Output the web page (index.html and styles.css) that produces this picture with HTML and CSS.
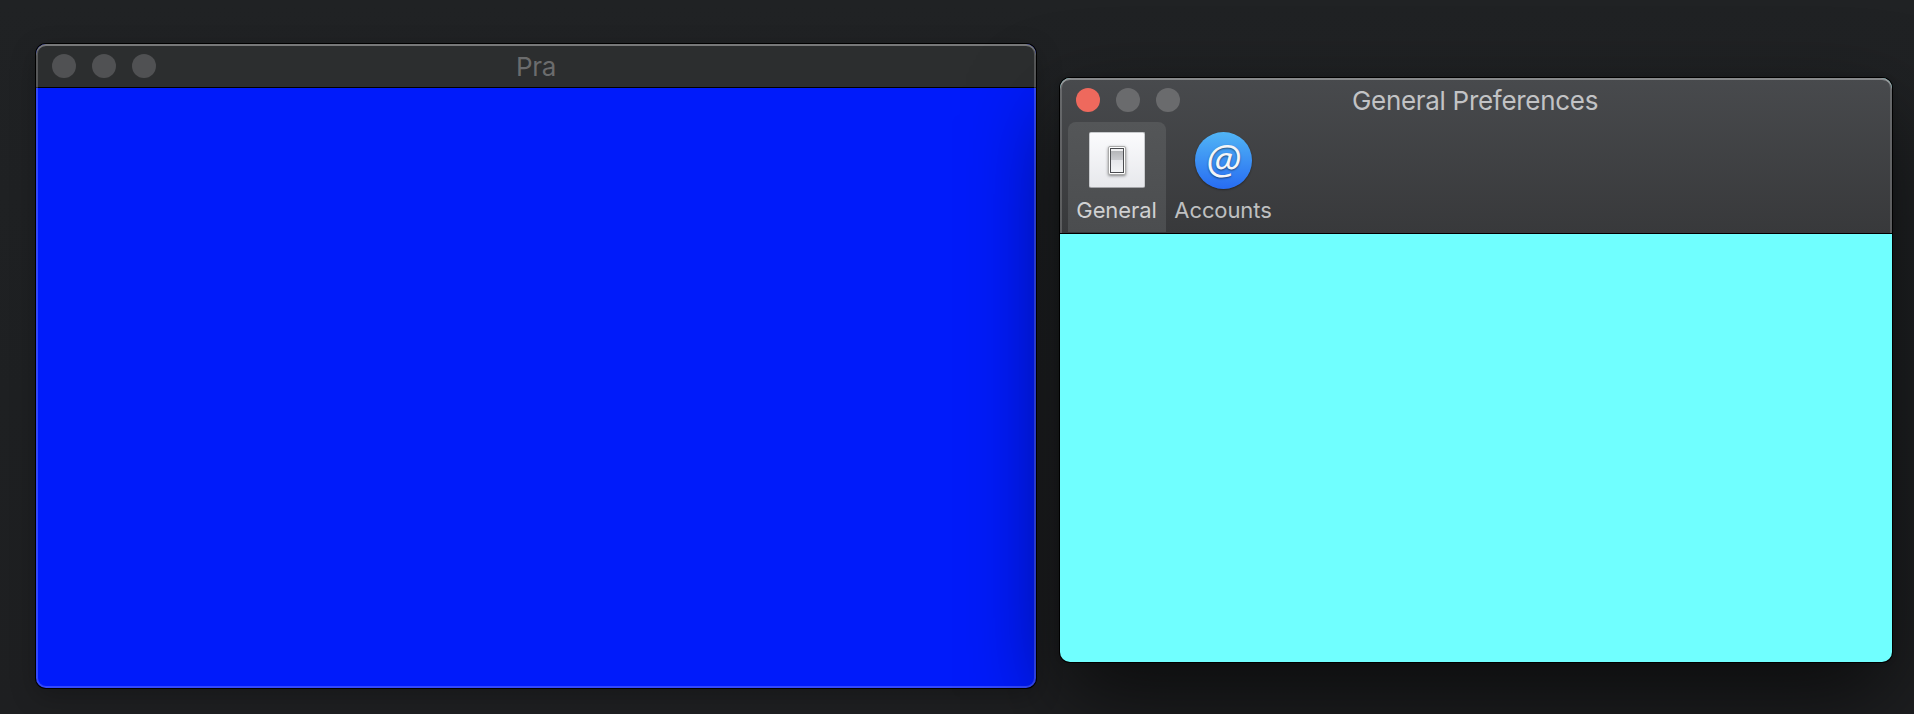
FILE: index.html
```html
<!DOCTYPE html>
<html lang="en">
<head>
<meta charset="utf-8">
<title>General Preferences</title>
<link rel="stylesheet" href="styles.css">
</head>
<body>
<main class="desktop">
  <section class="window main-window">
    <header class="titlebar">
      <div class="lights"><i class="light"></i><i class="light"></i><i class="light"></i></div>
      <h1 class="title"><span>Pra</span></h1>
    </header>
    <div class="content"></div>
  </section>
  <section class="window prefs-window">
    <header class="chrome">
      <div class="titlebar">
        <div class="lights"><i class="light close"></i><i class="light"></i><i class="light"></i></div>
        <h1 class="title"><span>General Preferences</span></h1>
      </div>
      <nav class="toolbar">
        <div class="item selected">
          <span class="icon switch-plate"><span class="switch"><span class="rocker"></span></span></span>
          <span class="label general">General</span>
        </div>
        <div class="item">
          <span class="icon at-badge"><span class="at">@</span></span>
          <span class="label accounts">Accounts</span>
        </div>
      </nav>
    </header>
    <div class="content"></div>
  </section>
</main>
</body>
</html>
```

FILE: styles.css
```css
* { box-sizing: border-box; }
body { margin: 0; overflow: hidden; font-family: Inter, "Liberation Sans", sans-serif; }
.desktop {
  display: flex;
  align-items: flex-start;
  gap: 24px;
  width: 1914px;
  height: 714px;
  padding: 44px 0 0 36px;
  background: linear-gradient(#202224, #1e2022 55%, #1e1f21);
}
.window {
  position: relative;
  display: flex;
  flex-direction: column;
  flex: none;
  border-radius: 10px;
}
.window::after {
  content: "";
  position: absolute;
  inset: 0;
  border-radius: 10px;
  pointer-events: none;
}
.main-window {
  width: 1000px;
  height: 644px;
  background: #001bfa;
  box-shadow: 0 0 0 1px #000, 0 8px 26px rgba(0, 0, 0, .25);
}
.main-window::after { box-shadow: inset 0 0 0 2px rgba(255, 255, 255, .2), inset 0 2px 0 rgba(255, 255, 255, .2); }
.prefs-window {
  width: 832px;
  height: 584px;
  margin-top: 34px;
  background: #70ffff;
  box-shadow: 0 0 0 1px #000, 0 36px 90px rgba(0, 0, 0, .62), 0 0 6px rgba(0, 0, 0, .2);
}
.prefs-window::after {
  height: 155px;
  border-radius: 10px 10px 0 0;
  box-shadow: inset 2px 0 0 rgba(255, 255, 255, .18), inset -2px 0 0 rgba(255, 255, 255, .18), inset 0 2px 0 rgba(255, 255, 255, .35);
}
.titlebar { display: grid; grid-template-columns: 1fr auto 1fr; flex: none; height: 44px; }
.main-window .titlebar {
  border-radius: 10px 10px 0 0;
  border-bottom: 1px solid #000;
  background: #2c2e2f;
}
.lights { display: flex; gap: 16px; padding: 10px 0 0 16px; }
.light { width: 24px; height: 24px; border-radius: 50%; background: #505153; }
.prefs-window .light { background: #6a6b6d; }
.prefs-window .light.close { background: #ee695d; }
.title { margin: 0; font-size: 26px; font-weight: 400; line-height: 46px; letter-spacing: -.3px; color: #6b6c6d; }
.prefs-window .title { margin: 0 1px 0 -1px; color: #c2c3c5; }
.chrome {
  flex: none;
  height: 156px;
  border-bottom: 1px solid #000;
  border-radius: 10px 10px 0 0;
  background: linear-gradient(#484a4d, #38393b);
}
.toolbar { display: flex; padding-left: 8px; }
.item {
  display: flex;
  flex-direction: column;
  align-items: center;
  width: 98px;
  height: 110px;
  padding-top: 10px;
  border-radius: 8px 8px 0 0;
}
.item + .item { width: 115px; }
.item.selected { background: linear-gradient(#545658, #4b4d4f); }
.icon { display: flex; align-items: center; justify-content: center; flex: none; }
.switch-plate {
  width: 56px;
  height: 56px;
  margin-bottom: 1px;
  border: 1px solid #c8cacd;
  border-bottom-color: #a4a5a9;
  border-radius: 2px;
  background: linear-gradient(#fbfbfd, #e7e8ec);
}
.switch {
  width: 18px;
  height: 29px;
  padding: 1px;
  border: 1px solid #aaa;
  border-radius: 2px;
  background: #fff;
  box-shadow: 0 1px 3px rgba(0, 0, 0, .45);
}
.rocker {
  display: block;
  width: 14px;
  height: 25px;
  border: 1px solid #4b4c50;
  background: linear-gradient(#efeff1 0 2px, #b5b6b9 2px, #cbccd0 11px, #e5e6ea 11px, #f3f4f6);
}
.at-badge {
  width: 57px;
  height: 57px;
  border-radius: 50%;
  background: linear-gradient(#51b5f5, #276cf2);
  box-shadow: 0 1px 2px rgba(0, 0, 0, .4);
}
.at {
  padding-bottom: 5px;
  font: italic 400 41px/52px "Open Sans", "Noto Sans", sans-serif;
  color: #f4f5f7;
  text-shadow: 0 1px 2px rgba(0, 0, 0, .5);
}
.label { margin: 8px 1px 0 0; font-size: 22px; line-height: 26px; letter-spacing: -.1px; color: #bfc0c1; white-space: nowrap; }
.selected .label { color: #d0d1d2; }
.content { flex: 1; }
```
